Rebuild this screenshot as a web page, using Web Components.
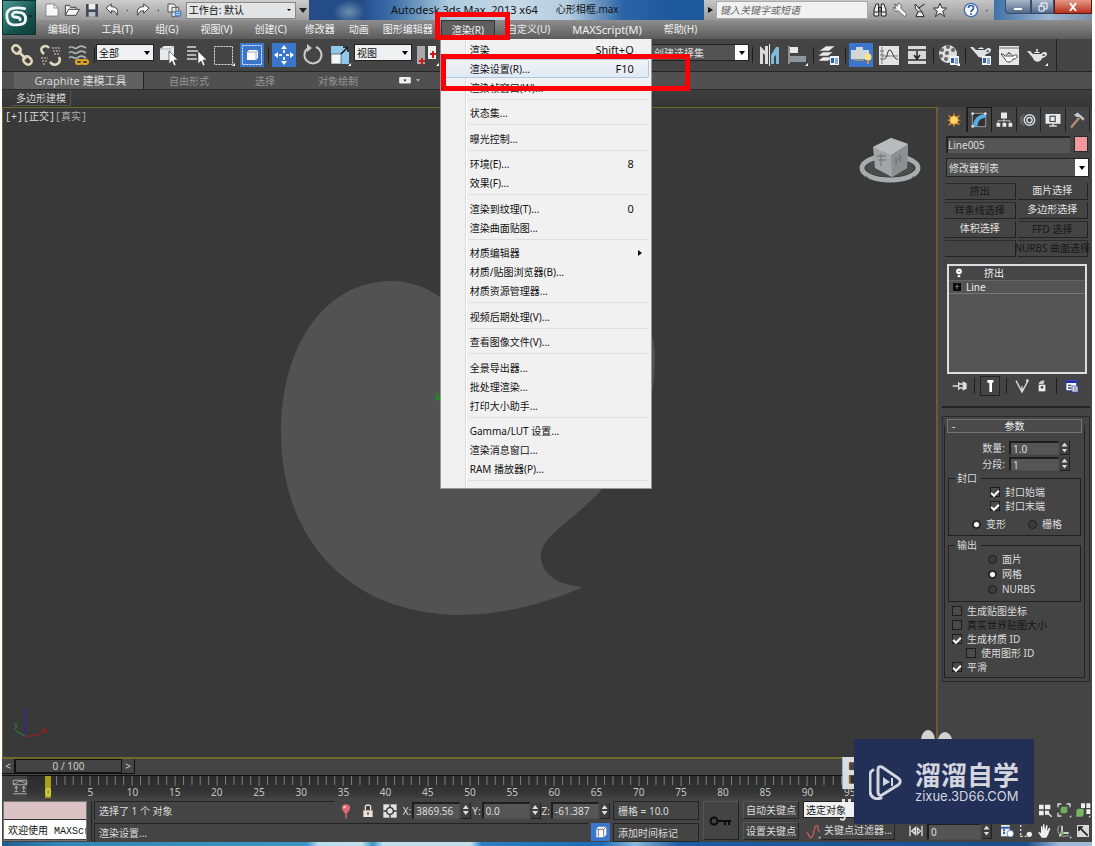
<!DOCTYPE html>
<html lang="zh-CN">
<head>
<meta charset="utf-8">
<title>Autodesk 3ds Max 2013 x64 - 心形相框.max</title>
<style>
html,body{margin:0;height:100%}
body{background:#fff;font:10px/14px "Noto Sans","Noto Sans CJK SC",sans-serif;color:#dcdcdc;overflow:hidden}
</style>
</head>
<body>
<max-app></max-app>
<script>
const RESET = `*{box-sizing:border-box}button,input,select{font:inherit;color:inherit;margin:0;padding:0;border:0;background:none;border-radius:0;outline:0}:host([hidden]){display:none}`;

function element(name, css, html) {
  customElements.define(name, class extends HTMLElement {
    constructor() {
      super();
      this.attachShadow({ mode: 'open' });
    }
    connectedCallback() {
      const body = typeof html === 'function' ? html(this) : html;
      this.shadowRoot.innerHTML = `<style>${RESET}${css}</style>${body}`;
    }
  });
}

/* ---------- icon set, all on a 24 unit grid ---------- */
const cubeBadge = '<rect x="13" y="13" width="9" height="9" fill="#eef3fa"/><rect x="14" y="15" width="3" height="5" fill="#2c5fa8"/><path d="M18 16h3M18 18h3M18 20h3" stroke="#2c5fa8"/>';
const fly = '<path d="M20 23l3-3v3z" fill="#fff"/>';
const ICONS = {
  link: '<g fill="none" stroke="#e3dabd" stroke-width="2.500"><rect x="2" y="3" width="9" height="7" rx="3.500" transform="rotate(45 6.500 6.500)"/><rect x="13" y="14" width="9" height="7" rx="3.500" transform="rotate(45 17.500 17.500)"/><path d="M8 8l8 8"/></g>',
  unlink: '<g fill="none" stroke="#e3dabd" stroke-width="2.500"><path d="M11 5C8 1 1 4 4 9l2 2"/><path d="M21 14c3 6-4 10-8 6l-1-1"/></g><g stroke="#8f8c84" stroke-width="2" stroke-dasharray="2 1"><path d="M14 5h8M15 8h7M16 11h5M3 15h7M4 18h5M5 21h3"/></g>',
  bind: '<g fill="none" stroke="#a8b4b8" stroke-width="1.6"><path d="M3 5c3-4 5 2 8 0s5-3 9 0M3 10c3-4 5 2 8 0s5-3 9 0M3 15c3-4 5 2 8 0s5-3 9 0"/></g><g fill="none" stroke="#e6a51e" stroke-width="2"><rect x="10" y="17" width="6" height="4" rx="2"/><rect x="16" y="17" width="6" height="4" rx="2"/></g>',
  pick: '<path d="M4 6l4-3h10v11l-4 3H4z" fill="#e8ebee"/><path d="M4 6h10v11M14 6l4-3" fill="none" stroke="#aab0b5"/><path d="M13 8v13l3-3 2 5 2-1-2-5h4z" fill="#fff" stroke="#444" stroke-width=".7"/>',
  list: '<path d="M3 4h9M3 8h11M3 12h9M3 16h10" stroke="#d5d5d5" stroke-width="1.6"/><path d="M14 8v13l3-3 2 5 2-1-2-5h4z" fill="#fff" stroke="#444" stroke-width=".7"/>',
  region: '<rect x="2.500" y="3.500" width="18" height="18" fill="none" stroke="#e0e0e0" stroke-dasharray="2 1"/>' + fly,
  windowSel: '<rect x="2.500" y="2.500" width="19" height="19" fill="none" stroke="#e8f0ff" stroke-dasharray="2 1"/><path d="M7 9l2-2h9v8l-2 2H7z" fill="#fff"/><path d="M7 9h9v8M16 9l2-2" fill="none" stroke="#9aabbd"/>',
  move: '<path d="M12 2l3 4H9zM12 22l3-4H9zM2 12l4-3v6zM22 12l-4-3v6z" fill="#fff"/><path d="M11 7h2v3h-2zM11 14h2v3h-2zM7 11h3v2H7zM14 11h3v2h-3z" fill="#e6effa"/>',
  rotate: '<path d="M8 5a8.500 8.500 0 1 0 8-1" fill="none" stroke="#c9c9c9" stroke-width="2"/><path d="M7 1v8l5-4z" fill="#c9c9c9"/>',
  scale: '<rect x="3" y="3" width="18" height="18" fill="#8fc8ea"/><rect x="3" y="11" width="10" height="10" fill="#f2f4f6" stroke="#333" stroke-width=".6"/><path d="M13 11l6-6M15 4h5v5" stroke="#101010" fill="none" stroke-width="1.500"/>' + fly,
  pivot: '<path d="M1 3h8v18H1z" fill="#a9a9a9"/><path d="M12 3h8v13h-8z" fill="#f0f0f0"/><path d="M6 15v7M3 18h6M17 8v7M14 11h6" stroke="#d01818" stroke-width="2"/>' + fly,
  mirror: '<path d="M3 21V3l5 5V3h3v18H8v-9l-2-2v11z" fill="#d9dde0"/><path d="M12.500 1v22" stroke="#e8e8e8"/><path d="M14 21v-9l5-8h3v17h-3v-9l-2 2v7z" fill="#7fb9de"/>',
  align: '<path d="M4 3v18" stroke="#ddd"/><rect x="5" y="4" width="8" height="6" fill="#e8e8e8"/><rect x="5" y="13" width="16" height="6" fill="#8f979c"/>' + fly,
  layers: '<path d="M2 8l7-5h9l-6 5zM2 12l4-3h10l-5 4H2zM2 17l4-3h10l-5 4H2z" fill="#e9e9e9" stroke="#555" stroke-width=".6"/>' + cubeBadge,
  ribbon: '<path d="M2 7h5V4h7v3h6v9H2z" fill="#d3d6d8"/><path d="M2 16l4 2h9v-2" fill="#8d9194"/><circle cx="19" cy="14" r="3.500" fill="#ffe08a"/><path d="M18 17h2v4h-2z" fill="#e0912a"/>',
  curve: '<rect x="2" y="3" width="20" height="19" fill="#e4e4e4"/><path d="M5 4v17M3 8h4M3 12h4M3 16h4M6 13h15" stroke="#777"/><path d="M7 16c4 0 3-10 6-9s3 10 8 9" fill="none" stroke="#333"/>',
  schematic: '<rect x="3" y="3" width="18" height="18" fill="#d8d8d8"/><path d="M3 7h18M3 17h18" stroke="#555" stroke-width="2"/><path d="M12 8v7M9 12l3 4 3-4" stroke="#222" fill="none" stroke-width="1.500"/>',
  material: '<circle cx="11" cy="11" r="9" fill="#dedede"/><g fill="#666"><circle cx="11" cy="4" r="2"/><circle cx="5" cy="7" r="2"/><circle cx="16" cy="7" r="2"/><circle cx="10" cy="10" r="2"/><circle cx="4" cy="13" r="2"/><circle cx="9" cy="16" r="2"/></g>' + cubeBadge + fly,
  renderSetup: '<path d="M1 4h3l3 3h9c3-3 6-2 6 0s-3 4-5 4c-1 4-7 5-9 1z" fill="#dde1e4"/><path d="M17 8c2-1 3-1 3 0s-1 1-2 1z" fill="#444"/><path d="M9 6c1-2 5-2 6 0z" fill="#eee"/>' + cubeBadge,
  frame: '<rect x="2" y="3" width="20" height="19" fill="#e8e8e8"/><path d="M2 5h20" stroke="#aaa" stroke-width="2"/><path d="M4 11h2l2 2h8c3-2 5-1 4 1s-2 2-4 2c-1 4-7 4-8 0z" fill="#fafafa" stroke="#444"/><path d="M9 12c1-2 5-2 6 0M12 9v1" fill="none" stroke="#444"/>',
  teapot: '<path d="M2 8h3l3 3h8c3-3 6-2 6 0s-3 4-5 4c-1 5-8 5-9 0z" fill="#dfe3e6"/><path d="M17 12c2-1 3-1 3 0s-1 1-2 1z" fill="#444"/><path d="M9 10c1-2 5-2 6 0z" fill="#eee"/><circle cx="12" cy="7" r="1" fill="#eee"/>' + fly,
  sun: '<path d="M12 2l2 6 6-3-3 6 5 1-5 2 3 5-6-2-2 5-2-5-6 3 3-6-5-2 5-1-3-6 6 3z" fill="#d98a2c"/><circle cx="12" cy="12" r="5" fill="#ffd66a"/>',
  modify: '<rect x="3" y="3" width="18" height="18" fill="#333" stroke="#b9b9b9"/><path d="M4 21C4 11 11 4 21 4v5c-7 0-11 5-11 12z" fill="#5aaee6"/><path d="M2 2h3v3H2zM19 2h3v3h-3zM2 19h3v3H2z" fill="#eee"/>',
  hierarchy: '<path d="M8 2h8v8H8z" fill="#e8e8e8"/><path d="M12 10v6M4 17v-4h16v4" stroke="#ddd" fill="none"/><path d="M2 16h5v5H2zM10 16h5v5h-5zM18 16h5v5h-5z" fill="#e8e8e8"/>',
  motion: '<circle cx="14" cy="12" r="7" fill="none" stroke="#d5d8da" stroke-width="2"/><circle cx="14" cy="12" r="3.500" fill="none" stroke="#d5d8da" stroke-width="2"/><path d="M4 6c-3 4-3 8 0 12M7 4c-4 5-4 11 0 16" fill="none" stroke="#888"/>',
  display: '<rect x="2" y="4" width="20" height="13" fill="#e9ebed"/><rect x="8" y="7" width="7" height="7" fill="none" stroke="#444" stroke-width="1.500"/><path d="M7 20h10M12 17v3" stroke="#ddd" stroke-width="2"/>',
  hammer: '<path d="M4 22L15 9" stroke="#b98e74" stroke-width="3"/><path d="M8 5l5-3 9 8-2 3-5-5-4 0z" fill="#c3c8cb"/>',
  pin: '<path d="M1 12h9M10 6v12M10 9h7M10 15h7" stroke="#ddd" stroke-width="2" fill="none"/><path d="M16 5l6 3v8l-6 3z" fill="#ddd"/>',
  showEnd: '<path d="M8 3h9v4h-2v14h-4V7H8z" fill="#fff"/>',
  unique: '<path d="M3 4l9 17 9-17M12 20v-8M7 12l5 8 5-8" fill="none" stroke="#ddd" stroke-width="2"/><circle cx="20" cy="4" r="2" fill="#ddd"/>',
  bin: '<path d="M7 10h10v10H7z" fill="#eee"/><path d="M7 9c0-4 5-6 9-5l-2 5z" fill="#ccc"/><circle cx="12" cy="14" r="2" fill="#444"/>',
  config: '<rect x="3" y="4" width="16" height="15" fill="#fff" stroke="#1a2cc0"/><path d="M3 6h16" stroke="#1a2cc0" stroke-width="3"/><path d="M6 11h5M6 15h5" stroke="#444" stroke-width="2"/><path d="M12 12h9v9h-9z" fill="#e8e8e8" stroke="#1a2cc0"/><path d="M15 15h4M15 18h4" stroke="#333"/>',
  bulb: '<circle cx="12" cy="8" r="7" fill="#fff"/><path d="M9 8h6" stroke="#555" stroke-width="2"/><path d="M9 17h6v5H9z" fill="#fff"/>',
  fileNew: '<path d="M3 3h12l6 6v12H3z" fill="#f8f8f8" stroke="#666"/><path d="M15 3v6h6" fill="none" stroke="#666"/>',
  open: '<path d="M2 20V5h6l2 3h8v3" fill="#e8e8e8" stroke="#444" stroke-width="1.500"/><path d="M2 20l5-9h16l-5 9z" fill="#f8f8f8" stroke="#444" stroke-width="1.500"/>',
  save: '<path d="M3 3h18v19H3z" fill="#404a56"/><path d="M7 3h10v8H7z" fill="#eee"/><path d="M7 15h10v7H7z" fill="#b8c0c8"/>',
  undo: '<path d="M3 9l8-6v4c8 0 11 5 9 13-2-5-4-7-9-7v4z" fill="#f5f5f5" stroke="#444" stroke-width="1.500"/>',
  redo: '<path d="M21 9l-8-6v4C5 7 2 12 4 20c2-5 4-7 9-7v4z" fill="#f5f5f5" stroke="#444" stroke-width="1.500"/>',
  project: '<path d="M3 3h9l3 3v9H3zM9 8h10v14H9z" fill="#eee" stroke="#555" stroke-width="1.500"/><path d="M13 13h10v9H13z" fill="#4b86c8"/><path d="M15 16h6M15 19h6" stroke="#fff"/>',
  binocular: '<path d="M3 21V12l3-9h4v18zM21 21V12l-3-9h-4v18z" fill="#eee" stroke="#222" stroke-width="1.500"/><path d="M10 8h4v6h-4zM3 15h7M14 15h7" stroke="#222" fill="none" stroke-width="1.500"/>',
  wrench: '<path d="M4 3l4 3 1-4c4 0 6 4 4 7l9 9-3 4-10-9C5 15 2 12 2 8l4 2z" fill="#f4f4f4" stroke="#333"/>',
  dish: '<path d="M5 3c-2 6 3 13 10 12zM10 9l9-6M9 15l-3 7h12l-3-7" fill="#eee" stroke="#222" stroke-width="1.500"/>',
  star: '<path d="M12 2l3 7h7l-6 5 3 8-7-5-7 5 3-8-6-5h7z" fill="#f0f0f0" stroke="#333" stroke-width="1.500"/>',
  help: '<circle cx="12" cy="12" r="10" fill="#fff" stroke="#3d6fb4" stroke-width="2"/><path d="M8 9c0-5 8-5 8 0 0 3-4 3-4 6" fill="none" stroke="#2a5cab" stroke-width="2.500"/><circle cx="12" cy="18" r="1.500" fill="#2a5cab"/>',
  camera: '<rect x="2" y="7" width="20" height="11" rx="2" fill="#eee"/><path d="M9 11h6l-3 4z" fill="#333"/>',
  minicurve: '<path d="M3 3h18M3 9h18M3 3v6M21 3v6M3 21h18" stroke="#ccc" fill="none"/><path d="M3 8c6 0 5-4 9-4s6 4 9 3M7 11v6M17 11v6M5 14l2-3 2 3M15 14l2-3 2 3M5 18h4M15 18h4" stroke="#ccc" fill="none"/>',
  balloon: '<path d="M12 2c8 0 8 8 1 14v7h-2v-7C4 10 4 2 12 2z" fill="#e0696f"/><circle cx="10" cy="6" r="2" fill="#f7c3c4"/>',
  lock: '<path d="M8 11V6c0-4 8-4 8 0v5" fill="none" stroke="#ddd" stroke-width="2"/><rect x="5" y="11" width="14" height="10" fill="#f1e3cf"/><path d="M12 14v4" stroke="#444" stroke-width="2"/>',
  absmode: '<rect x="2" y="2" width="20" height="20" fill="#dfe2e4"/><circle cx="12" cy="12" r="5" fill="none" stroke="#333" stroke-width="2"/><path d="M12 2v5M12 17v5M2 12h5M17 12h5" stroke="#333" stroke-width="2"/>',
  cube: '<path d="M5 8l3-4h12v12l-4 4H5z" fill="#fff"/><path d="M6 8h10v11M16 8l4-4M8 8v11" fill="none" stroke="#333"/>',
  key: '<circle cx="5" cy="12" r="3.500" fill="none" stroke="#0c0c0c" stroke-width="2"/><path d="M9 12h13M16 12v4M20 12v4" stroke="#0c0c0c" stroke-width="2"/>',
  tangent: '<path d="M2 14c4 0 3 8 7 8 5 0 4-20 9-18 3 2 1 9 4 9" fill="none" stroke="#c85a5e" stroke-width="2"/>' + fly,
  keymode: '<path d="M3 4v16M21 4v16" stroke="#ddd" stroke-width="2"/><path d="M12 5v14l-8-7zM20 12l-7-7v14z" fill="#ddd"/><path d="M8 12h2M15 12h2" stroke="#444" stroke-width="2"/>',
  timecfg: '<path d="M3 3h13v17H3z" fill="#eee"/><path d="M3 7h13M6 11h3M6 15h3" stroke="#2f5fae" stroke-width="3"/><circle cx="17" cy="16" r="5" fill="#fff" stroke="#2f5fae"/>',
  zoomAll: '<path d="M3 4h7v7H3zM12 4h8v7h-8zM3 13h7v7H3zM12 13h6v6h-6z" fill="#eee"/><path d="M15 15l7 7" stroke="#eee" stroke-width="2"/>',
  extents: '<path d="M3 8V3h5M16 3h5v5M3 16v5h5" fill="none" stroke="#ddd" stroke-width="2"/><path d="M7 9l2-2h8v8l-2 2H7z" fill="#6fae5e"/>' + fly,
  extentsAll: '<path d="M9 2h6v7H9zM17 2h6v7h-6zM17 11h6v7h-6z" fill="#eee"/><path d="M2 13l2-3h9v9l-2 3H2z" fill="#78b565"/>' + fly,
  fov: '<path d="M4 3v3M4 9v3M4 15v3M3 20h4M10 20h3" stroke="#ddd" stroke-width="2"/><circle cx="17" cy="17" r="4" fill="#eee"/>',
  hand: '<path d="M7 22c-2-4-5-6-5-9l4 2V5l2 0 1 6V2h2l1 9 2-8 2 1-1 8 3-5 2 1-3 9-3 5z" fill="#eee"/>',
  orbit: '<path d="M5 4c-4 5-3 14 5 16l10-1" fill="none" stroke="#ddd"/><path d="M9 4v11h10M9 15l-4 5" fill="none" stroke="#fff" stroke-width="2"/><circle cx="9" cy="15" r="3" fill="#7cb66a"/>' + fly,
  maximize: '<path d="M3 3h18v18H3z" fill="#d8d8d8"/><path d="M6 12V6h6M7 7l12 12" stroke="#222" fill="none" stroke-width="2.500"/>'
};
element('mx-icon',
  `:host{display:inline-flex;flex:none;width:24px;height:24px}
   :host([size=m]){width:16px;height:16px}
   svg{width:100%;height:100%;display:block}`,
  el => `<svg viewBox="0 0 24 24" aria-hidden="true">${ICONS[el.getAttribute('name')] || ''}</svg>`);

element('mx-tool', `:host{display:block;flex:none}
   button{display:flex;width:28px;height:26px;align-items:center;justify-content:center}
   :host([on]) mx-icon{background:#3a76cc}
   :host([size=s]) button{width:19px;height:18px}:host([size=s]) mx-icon{width:16px;height:16px}
   :host([size=s][on]) button{background:#3a76cc}
   :host([size=q]) button{width:20px;height:20px}:host([size=q]) mx-icon{width:16px;height:16px}`,
  el => `<button aria-label="${el.getAttribute('icon')}"><mx-icon name="${el.getAttribute('icon')}"></mx-icon></button>`);

element('mx-rule', `:host{flex:none;width:4px;height:16px;display:flex;justify-content:center}
   :host([wide]){width:6px}i{width:1px;background:#1d1d1d}`, '<i></i>');

element('mx-select', `:host{display:flex;background:#eef0f1;color:#111;height:17px;border:1px solid #222}
   select{appearance:none;flex:1;min-width:0;padding-left:2px}
   span{width:13px;display:flex;align-items:center;justify-content:center}
   span::after{content:"";border:3px solid transparent;border-top:4px solid #000;border-bottom:0}
   :host([dark]){background:#535353;color:#ddd}:host([dark]) span{background:#fff}
   :host([dim]){background:#e2e4e6;border-color:#888}:host([dim]) span::after{border-width:2px}`,
  el => `<select aria-label="${el.getAttribute('label')}"><option>${el.textContent}</option></select><span></span>`);

/* label, number field and its two arrow buttons */
element('mx-spin', `:host{display:flex;align-items:center;gap:1px}
   label{display:flex;align-items:center;gap:1px}
   input{width:48px;height:17px;background:#555;border:2px solid #1e1e1e;border-right:1px solid #4e4e4e;border-bottom:1px solid #4e4e4e;padding:0 0 0 2px;color:#ddd}
   .a{display:flex;flex-direction:column;gap:2px;width:10px;height:16px;justify-content:center;align-items:center;background:#3e3e3e;border-right:1px solid #222;border-bottom:1px solid #222}
   .a button{width:6px;height:4px;background:#ddd;clip-path:polygon(50% 0,100% 100%,0 100%)}
   .a button+button{clip-path:polygon(0 0,100% 0,50% 100%)}
   :host([panel]) input{width:50px;height:14px;line-height:11px}:host([panel]) label{gap:4px}:host([panel]) .a{height:14px}
   :host([frame]) input{width:54px}`,
  el => `<label>${el.getAttribute('label') || ''}<input aria-label="${el.getAttribute('label') || '当前帧'}" value="${el.getAttribute('value')}"></label>
   <div class="a"><button aria-label="增加"></button><button aria-label="减少"></button></div>`);

element('mx-check', `:host{display:block}label{display:flex;align-items:center;gap:5px;height:14px;white-space:nowrap}
   input{appearance:none;width:10px;height:10px;background:#4a4a4a;border:1px solid #1c1c1c;display:grid;place-items:center}
   input[type=radio]{border-radius:50%;background:#3c3c3c;width:9px;height:9px}
   input[type=radio]:checked::after{content:"";width:5px;height:5px;border-radius:50%;background:#fff}
   input[type=checkbox]:checked::after{content:"";width:6px;height:3px;border-left:2px solid #fff;border-bottom:2px solid #fff;transform:rotate(-45deg)}
   :host([off]){color:#161616}`,
  el => `<label><input type="${el.getAttribute('type') || 'checkbox'}" ${el.hasAttribute('checked') ? 'checked' : ''}><slot></slot></label>`);

/* ---------- title bar ---------- */
element('title-bar', `:host{display:flex;height:20px;position:relative;color:#111;
   background:radial-gradient(ellipse 16px 12px at 347px 12px,#6d8fb0,transparent),linear-gradient(90deg,#244c86 0 33%,#2b5a9a 34%,#3f72a8 36%,#aecbe0 41%,#c6d9e6 47%,#b5cde0 52%,#2b64a6 57%,#1d589c 62%,#2a64a0 90%,#9db6d2 96%,#7f8fa8)}
   .logo{position:absolute;left:0;top:0;width:34px;height:35px;background:linear-gradient(135deg,#4a9a94,#16534f 60%,#0e3d3b);z-index:2;border:1px solid #0c3331}
   .logo svg{width:100%;height:100%;display:block}
   .quick{display:flex;width:307px;padding-left:40px;background:linear-gradient(#cdcdcd,#9c9c9c);align-items:center}
   .quick mx-select{width:111px;margin-left:2px}
   .dot{width:11px;text-align:center;color:#333}
   .more{width:13px;display:flex;justify-content:center}.more::after{content:"";border:4px solid transparent;border-top:5px solid #222;border-bottom:0}
   h1{flex:1;margin:0;font-size:11px;line-height:19px;font-weight:400;white-space:pre;padding-left:82px;display:flex;gap:18px}
   h1 span{font-size:10px}
   .info{display:flex;width:290px;background:linear-gradient(#c6c6c6,#989898);align-items:center}
   .play{width:12px;display:flex;justify-content:center}.play::after{content:"";border:3px solid transparent;border-left:5px solid #111;border-right:0}
   .info input{width:152px;height:18px;background:#f1f1f1;border:1px solid #aaa;font-style:italic;padding-left:3px;margin-right:2px}
   .info input::placeholder{color:#666;opacity:1}.help{margin-left:11px}
   .win{display:flex;padding-left:11px;width:98px;height:14px}
   .win button{height:14px;color:#fff;border:1px solid #3a4c66;border-top:0;background:linear-gradient(#a9b8ca,#51698b);display:grid;place-items:center}
   .win svg{width:12px;height:10px}
   .n{width:26px;border-bottom-left-radius:4px!important}.m{width:23px}.win .x{flex:1;background:linear-gradient(#e59a86,#b8301c);border-color:#5c1810}`,
  `<button class="logo" aria-label="应用程序菜单"><svg viewBox="0 0 34 35"><path d="M23 8C12 6 4 8 4 15c0 4 1 9 6 10 8 1 14 0 14-6 0-4-2-7-8-7-6-1-8 4-4 5 4 0 7 1 6 3" fill="none" stroke="#f2f6f6" stroke-width="3" stroke-linecap="round"/><path d="M26 15h6l-3 3z" fill="#052a28"/></svg></button>
   <div class="quick"><mx-tool size="q" icon="fileNew"></mx-tool><mx-tool size="q" icon="open"></mx-tool><mx-tool size="q" icon="save"></mx-tool><mx-tool size="q" icon="undo"></mx-tool><span class="dot">·</span><mx-tool size="q" icon="redo"></mx-tool><span class="dot">·</span><mx-tool size="q" icon="project"></mx-tool><mx-select dim label="工作台">工作台: 默认</mx-select><span class="more"></span></div>
   <h1>Autodesk 3ds Max  2013 x64<span>心形相框.max</span></h1>
   <div class="info"><span class="play"></span><input type="search" aria-label="搜索" placeholder="键入关键字或短语"><mx-tool size="q" icon="binocular"></mx-tool><mx-tool size="q" icon="wrench"></mx-tool><mx-tool size="q" icon="dish"></mx-tool><mx-tool size="q" icon="star"></mx-tool><mx-tool class="help" size="q" icon="help"></mx-tool><span class="dot">·</span></div>
   <div class="win"><button class="n" aria-label="最小化"><svg viewBox="0 0 12 10"><path d="M2 7h8" stroke="#fff" stroke-width="2"/></svg></button><button class="m" aria-label="还原"><svg viewBox="0 0 12 10"><path d="M2 4h5v5H2zM4 4V1h6v6H7" fill="none" stroke="#fff"/></svg></button><button class="x" aria-label="关闭"><svg viewBox="0 0 12 10"><path d="M3 1l6 8M9 1L3 9" stroke="#fff" stroke-width="2"/></svg></button></div>`);

/* ---------- menu bar and the open drop-down ---------- */
element('menu-entry', `:host{display:block;position:relative;flex:none}
   button{height:19px;padding:0 10px;line-height:19px;color:#f1f1f1;white-space:nowrap}
   :host([tight]) button{padding:0 6px}:host([open]) button{background:#5e5e5e;border:1px solid #333;border-bottom:0;line-height:18px}
   :host([big]) button{font-size:11px}
   ::slotted(drop-menu){position:absolute;left:-1px;top:19px;z-index:10}`,
  el => `<button>${el.getAttribute('text')}</button><slot></slot>`);

element('drop-menu', `:host{display:block;width:212px;border:1px solid #979797;border-top:0;background:linear-gradient(90deg,#f0f0f0 24px,#dcdcdc 24px 25px,#fff 25px 26px,#f1f1f1 26px);padding:1px 2px 3px;color:#111}`,
  '<slot></slot>');
element('menu-group', `:host{display:block;padding-bottom:4px;margin-bottom:2px;background:linear-gradient(90deg,transparent 26px,#dedede 26px) 0 calc(100% - 1px)/100% 1px no-repeat}
   :host(:nth-of-type(even)){margin-bottom:3px}`, '<slot></slot>');
element('menu-cmd', `:host{display:block;height:19px}
   button{display:flex;justify-content:space-between;align-items:center;width:100%;height:19px;padding:0 14px 0 26px;border:1px solid transparent;text-align:left;white-space:nowrap}
   :host([hot]) button{border:1px solid #aec8e6;border-radius:2px;background:linear-gradient(#f2f6fb80,#e0e9f6)}
   kbd{font:inherit;font-size:11px}
   :host([sub]) kbd{border:4px solid transparent;border-left-color:#111;border-right:0;border-width:3px 0 3px 4px;margin-right:-8px}`,
  el => `<button><span><slot></slot></span><kbd>${el.getAttribute('key') || ''}</kbd></button>`);

const MENU = [
  [['渲染', 'Shift+Q'], ['渲染设置(R)...', 'F10', 'hot'], ['渲染帧窗口(W)...']],
  [['状态集...']], [['曝光控制...']],
  [['环境(E)...', '8'], ['效果(F)...']],
  [['渲染到纹理(T)...', '0'], ['渲染曲面贴图...']],
  [['材质编辑器', '', 'sub'], ['材质/贴图浏览器(B)...'], ['材质资源管理器...']],
  [['视频后期处理(V)...']], [['查看图像文件(V)...']],
  [['全景导出器...'], ['批处理渲染...'], ['打印大小助手...']],
  [['Gamma/LUT 设置...'], ['渲染消息窗口...'], ['RAM 播放器(P)...']]
];
element('menu-bar', `:host{display:flex;gap:2px;height:19px;padding-left:36px;background:linear-gradient(#8e8e8e,#5b5b5b);position:relative;z-index:1}`,
  `<menu-entry text="编辑(E)"></menu-entry><menu-entry text="工具(T)"></menu-entry><menu-entry text="组(G)"></menu-entry><menu-entry text="视图(V)"></menu-entry><menu-entry text="创建(C)"></menu-entry><menu-entry tight text="修改器"></menu-entry><menu-entry tight text="动画"></menu-entry><menu-entry tight text="图形编辑器"></menu-entry>
   <menu-entry open text="渲染(R)"><drop-menu>${MENU.map(g => `<menu-group>${g.map(([t, k, f]) => `<menu-cmd key="${k || ''}" ${f || ''}>${t}</menu-cmd>`).join('')}</menu-group>`).join('')}</drop-menu></menu-entry>
   <menu-entry text="自定义(U)"></menu-entry><menu-entry big text="MAXScript(M)"></menu-entry><menu-entry text="帮助(H)"></menu-entry>`);

/* ---------- main toolbar ---------- */
const tools = s => s.split(' ').map(t => t === '|' ? '<mx-rule></mx-rule>' : t === '||' ? '<mx-rule wide></mx-rule>' : `<mx-tool icon="${t.replace('*', '')}" ${t.endsWith('*') ? 'on' : ''}></mx-tool>`).join('');
element('tool-bar', `:host{display:flex;height:33px;background:#444;border-bottom:1px solid #262626;padding:0 35px 0 6px}
   .in{flex:1;display:flex;align-items:center;border-right:1px solid #222;padding-right:5px}
   mx-select{margin-bottom:5px}.a{width:58px}.b{width:58px;margin-right:2px}.c{width:98px;margin-left:auto}`,
  `<div class="in">${tools('link unlink bind |')}<mx-select class="a" label="选择过滤器">全部</mx-select>${tools('pick list region windowSel* | move* rotate scale')}<mx-select class="b" label="参考坐标系">视图</mx-select>${tools('pivot')}
   <mx-select class="c" dark label="命名选择集">创建选择集</mx-select>${tools('|| mirror align | layers | ribbon* curve schematic | material | renderSetup frame teapot')}</div>`);

element('ribbon-bar', `:host{display:block;background:linear-gradient(#464646,#363636)}
   nav{display:flex;height:18px;background:#505050;border-bottom:1px solid #2a2a2a;padding-left:12px}
   nav button{font-size:11px;width:130px;height:17px;padding-left:4px;color:#d8d8d8;background:#616161;border-right:1px solid #222}
   nav button+button{font-size:10px;width:80px;color:#969696;background:none;border:0}
   nav .w{width:86px!important}nav .w2{width:66px!important}
   nav mx-icon{width:14px;height:14px;margin:1px 0 0 22px}
   nav i{border:2px solid transparent;border-top:3px solid #aaa;border-bottom:0;height:0;margin:7px 0 0 4px}
   div{height:17px;padding-left:10px}div button{height:16px;padding:0 4px;color:#d6d6d6;border:1px solid #555;border-top:0;border-left:0}`,
  `<nav><button>Graphite 建模工具</button><button class="w">自由形式</button><button class="w2">选择</button><button>对象绘制</button><mx-icon name="camera"></mx-icon><i></i></nav><div><button>多边形建模</button></div>`);

/* ---------- viewport ---------- */
element('view-port', `:host{display:block;flex:1;min-height:0;background:#393939;border:1px solid #6f6a2a;border-right:2px solid #6b5b3c;border-bottom:2px solid #6f6a2a;position:relative;overflow:hidden}
   svg{position:absolute;inset:0;width:100%;height:100%}
   p{position:absolute;left:2px;top:3px;margin:0;font:10px/14px "Liberation Mono","Noto Sans CJK SC",monospace;color:#ddd}p span{color:#aaa}
   text{font:8px "Noto Sans",sans-serif}`,
  `<svg viewBox="3 108 933 649"><path d="M392 281C322 281 281 350 281 432C281 540 350 615 462 615C500 615 545 604 583 587C555 585 541 572 541 556C541 535 575 520 603 488C640 450 656 405 655 352C650 300 620 280 560 300C510 320 470 320 440 297C425 286 408 281 392 281Z" fill="#525252"/>
   <path d="M436 392v9l5-2z" fill="#1f8a1f"/>
   <ellipse cx="890" cy="168" rx="28" ry="12" fill="none" stroke="#a9abae" stroke-width="5"/><ellipse cx="890" cy="168" rx="24" ry="9" fill="#4c4c4c"/><path d="M873 147l18-9 17 6-1 24-15 9-17-9z" fill="#a3a5a8"/><path d="M873 147l18 8 17-11-17-6z" fill="#b9bbbe"/><path d="M891 155l17-11-1 24-15 9z" fill="#8d8f92"/><path d="M877 156h9M878 160h8M881 154v12M896 157v8M900 154v8M896 161l6-4" stroke="#6d6f72" fill="none"/><path d="M866 176l4 4M914 176l-4 4" stroke="#55575a"/>
   <path d="M25 736V717" stroke="#2424c8"/><path d="M25 736l-9-5" stroke="#2c8a2c"/><path d="M25 736c10 1 16-3 21-5" stroke="#b01818" fill="none"/><path d="M42 729l5 3M46 728l-3 5" stroke="#b01818"/><text x="24" y="715" fill="#2424c8">z</text><text x="14" y="728" fill="#2c8a2c">y</text></svg>
   <p>[+][正交]<span>[真实]</span></p>`);

/* ---------- time slider and track bar ---------- */
element('time-slider', `:host{display:flex;height:16px;background:#444;color:#ccc}
   button{height:15px;border-right:1px solid #111;border-bottom:1px solid #111}.e{width:13px}.h{width:107px;border:1px solid #111;border-bottom-width:2px;line-height:12px}`,
  `<button class="e" aria-label="上一帧">&lt;</button><button class="h">0 / 100</button><button class="e" aria-label="下一帧">&gt;</button>`);

element('track-bar', `:host{display:flex;height:23px;background:linear-gradient(#2b2b2b,#333 14px,#3f3f3f);border-top:1px solid #111;padding-right:25px;color:#c4c4c4}
   .l{width:25px;background:#444;display:flex;flex:none;position:relative;z-index:1}
   .l mx-icon{margin:2px 0 0 8px;width:20px;height:18px}
   ol{flex:1;display:flex;list-style:none;margin:0;padding:0;position:relative}
   li{flex:1;text-align:center;line-height:12px;position:relative;min-width:0}
   li svg{display:block;width:100%;height:10px}
   li.now{background:linear-gradient(#a89d1c,#a89d1c) center/6px 100% no-repeat;color:#fff36a}`,
  `<div class="l"><mx-icon name="minicurve"></mx-icon></div><ol>${Array.from({ length: 21 }, (_, i) => `<li class="${i ? '' : 'now'}"><svg viewBox="0 0 50 10" preserveAspectRatio="none"><path d="${i ? 'M5 0v9M15 0v9M25 0v10' : ''}M35 0v9M45 0v9" stroke="#848484"/></svg>${i * 5 === 100 ? '' : i * 5}</li>`).join('')}</ol>`);

/* ---------- command panel ---------- */
element('roll-out', `:host{display:block;border:1px solid #2a2a2a;margin-top:8px;padding:2px 7px 3px 4px}
   h2{margin:0;font:inherit;display:flex;justify-content:center;height:14px;line-height:12px;border:1px solid #747474;background:#4a4a4a;color:#eee;position:relative}
   h2::before{content:"-";position:absolute;left:4px}
   .b{border:1px solid #222;border-top:0;margin:-8px -3px 0;padding:16px 3px 3px 3px}`,
  el => `<h2>${el.getAttribute('title')}</h2><div class="b"><slot></slot></div>`);

element('group-box', `:host{display:block}fieldset{border:1px solid #202020;margin:0;padding:0 2px 4px;min-width:0}
   legend{padding:0 4px 0 2px;margin-left:4px;line-height:14px;height:14px}`,
  el => `<fieldset><legend>${el.getAttribute('text')}</legend><slot></slot></fieldset>`);

element('command-panel', `:host{display:block;width:154px;flex:none;background:#444;padding:0 2px 0 4px}
   .tabs{display:flex;height:25px;margin-bottom:4px}
   .tabs button{flex:1;border-right:1px solid #222;display:grid;place-items:center}.tabs button.on{border:1px solid #1b1b1b;border-bottom:0}.tabs mx-icon{width:18px;height:18px}
   .name{display:flex;gap:4px;padding:0 2px 0 4px}.name input{flex:1;min-width:0;height:17px;line-height:13px;background:#555;border:2px solid #222;border-right:0;border-bottom:0;padding:0 0 2px}
   .name i{width:14px;height:16px;background:#f0989a;border:1px solid #2a2a2a}
   mx-select{height:19px;margin:5px 1px 6px 4px}
   .sets{display:grid;grid-template-columns:1fr 1fr;gap:2px;padding:0 2px 0 3px}
   .sets button{height:17px;line-height:15px;white-space:nowrap;border-right:1px solid #222;border-bottom:1px solid #222;min-width:0;display:flex;justify-content:center;color:#e2e2e2}
   .sets .off{color:#181818;border-top:1px solid #2c2c2c}
   .stack{height:110px;border:2px solid #ddd;background:#545454;margin:7px 3px 0 5px}
   .stack div{display:flex;align-items:center;height:14px;background:#464646;color:#eee;padding-left:5px}
   .stack div+div{background:#545454;border-top:1px solid #666;border-bottom:1px solid #777;padding-left:4px;gap:5px}
   .stack mx-icon{width:10px;height:12px;margin-right:20px}
   .plus{width:8px;height:8px;background:#0a0a0a;color:#aaa;font-size:8px;line-height:7px;text-align:center}
   .ops{display:flex;align-items:center;height:24px;padding:0 8px 0 10px}.ops mx-icon{width:16px;height:16px}
   .ops button{width:20px;height:20px;display:grid;place-items:center}.ops .on{border:1px solid #222}
   .ops mx-rule{margin:0 4px}.ops .g{margin-left:auto}
   hr{border:0;border-top:2px solid #222;margin:8px 0 0}
   .num{display:flex;flex-direction:column;align-items:flex-end;gap:2px;padding-right:11px}
   .c{padding-left:39px}.r{display:flex;gap:22px;padding-left:21px;margin-top:4px}.o{padding-left:37px}.o mx-check{margin-bottom:1px}
   group-box{margin-bottom:2px}.t{padding-left:4px}.i{padding-left:14px}`,
  `<div class="tabs">${['sun', 'modify', 'hierarchy', 'motion', 'display', 'hammer'].map(n => `<button aria-label="${n}" class="${n === 'modify' ? 'on' : ''}"><mx-icon name="${n}"></mx-icon></button>`).join('')}</div>
   <div class="name"><input aria-label="对象名称" value="Line005"><i></i></div>
   <mx-select dark label="修改器列表">修改器列表</mx-select>
   <div class="sets"><button class="off">挤出</button><button>面片选择</button><button class="off">样条线选择</button><button>多边形选择</button><button>体积选择</button><button class="off">FFD 选择</button><button class="off" aria-label="空"></button><button class="off">NURBS 曲面选择</button></div>
   <div class="stack"><div><mx-icon name="bulb"></mx-icon>挤出</div><div><span class="plus">+</span>Line</div></div>
   <div class="ops"><mx-icon name="pin"></mx-icon><mx-rule></mx-rule><button class="on" aria-label="显示最终结果"><mx-icon name="showEnd"></mx-icon></button><mx-rule></mx-rule><button aria-label="使唯一"><mx-icon name="unique"></mx-icon></button><button aria-label="移除修改器"><mx-icon name="bin"></mx-icon></button><mx-rule class="g"></mx-rule><button aria-label="配置修改器集"><mx-icon name="config"></mx-icon></button></div><hr>
   <roll-out title="参数"><div class="num"><mx-spin panel label="数量:" value="1.0"></mx-spin><mx-spin panel label="分段:" value="1"></mx-spin></div>
   <group-box text="封口"><div class="c"><mx-check checked>封口始端</mx-check><mx-check checked>封口末端</mx-check></div><div class="r"><mx-check type="radio" checked>变形</mx-check><mx-check type="radio">栅格</mx-check></div></group-box>
   <group-box text="输出"><div class="o"><mx-check type="radio">面片</mx-check><mx-check type="radio" checked>网格</mx-check><mx-check type="radio">NURBS</mx-check></div></group-box>
   <div class="t"><mx-check>生成贴图坐标</mx-check><mx-check off>真实世界贴图大小</mx-check><mx-check checked>生成材质 ID</mx-check><mx-check class="i">使用图形 ID</mx-check><mx-check checked>平滑</mx-check></div></roll-out>`);

/* ---------- status bar ---------- */
element('status-bar', `:host{display:flex;height:44px;background:#444;padding:3px 0 1px 1px;gap:4px;white-space:nowrap}
   .listen{width:84px;flex:none;border:1px solid #777;color:#111;overflow:hidden}
   .listen i{display:block;height:18px;background:#dbc3c5;border-bottom:1px solid #333}
   .listen input{display:block;width:100%;height:19px;background:#fff;padding-left:4px;font:10px "Liberation Mono","Noto Sans CJK SC",monospace;color:#111}
   .mid{flex:1;display:grid;grid-template-rows:19px 18px;gap:3px;min-width:0;border-left:1px solid #222}
   .row{display:flex;align-items:center;min-width:0;gap:3px}
   .msg{flex:1;height:19px;line-height:18px;border-top:1px solid #222;border-left:1px solid #222;padding-left:4px;margin-left:2px;min-width:0}
   .box{width:86px;height:19px;line-height:18px;border:1px solid #242424;padding-left:4px}
   .coords{display:flex;gap:1px}
   .key{width:36px;height:39px;border:1px solid #222;border-left-color:#555;border-top-color:#555;display:grid;place-items:center;flex:none}
   .two{display:grid;grid-template-rows:18px 18px;gap:3px;flex:none}
   .two button{border:1px solid #242424;border-top-color:#555;border-left-color:#555;height:18px;line-height:15px;padding:0 2px}
   .filt .row{gap:0}.filt .row button{border-top:0;border-left:0}
   .filt{width:98px;margin-right:3px}
   .time{width:87px}.time .row{gap:3px}.nav{grid-template-columns:repeat(5,19px);column-gap:0;margin-left:-2px}`,
  `<div class="listen"><i></i><input aria-label="MAXScript 侦听器" value="欢迎使用 MAXScript"></div>
   <div class="mid"><div class="row"><span class="msg">选择了 1 个 对象</span><mx-tool size="s" icon="balloon"></mx-tool><mx-tool size="s" icon="lock"></mx-tool><mx-tool size="s" icon="absmode"></mx-tool>
   <span class="coords"><mx-spin label="X:" value="3869.56"></mx-spin><mx-spin label="Y:" value="0.0"></mx-spin><mx-spin label="Z:" value="-61.387"></mx-spin></span><span class="box">栅格 = 10.0</span></div>
   <div class="row"><span class="msg">渲染设置...</span><mx-tool on size="s" icon="cube"></mx-tool><span class="box">添加时间标记</span></div></div>
   <button class="key" aria-label="设置关键点"><mx-icon name="key"></mx-icon></button>
   <div class="two"><button>自动关键点</button><button>设置关键点</button></div>
   <div class="two filt"><mx-select label="关键点集">选定对象</mx-select><div class="row"><mx-tool size="s" icon="tangent"></mx-tool><button>关键点过滤器...</button></div></div>
   <div class="two time"><span></span><div class="row"><mx-icon size="m" name="keymode"></mx-icon><mx-spin frame value="0"></mx-spin></div></div>
   <div class="two nav"><span></span><span></span>${['zoomAll', 'extents', 'extentsAll', 'timecfg', 'fov', 'hand', 'orbit', 'maximize'].map(n => `<mx-tool size="s" icon="${n}"></mx-tool>`).join('')}</div>`);

element('task-strip', `:host{display:block;height:4px;background:linear-gradient(90deg,#1d5f8e,#2f86b8 5%,#3b97c4 28%,#b9dcec 29%,#c3e0ee 33%,#3b97c4 34%,#c3e0ee 35%,#c3e0ee 43%,#2b7fc4 44%,#1c6cb4 55%,#8db8da 58%,#1d5ea4 62%,#1b4e8c 94%,#9db9d6 97%)}`, '');

/* ---------- overlays ---------- */
element('site-badge', `:host{display:flex;width:180px;height:85px;background:#222f57;color:#d3d6de;align-items:center;gap:12px;padding-left:15px}
   svg{width:34px;height:36px;flex:none}
   b{display:block;font:700 26px/28px "Noto Sans CJK SC",sans-serif}small{display:block;font:13px/16px Inter,sans-serif}`,
  `<svg viewBox="0 0 34 36"><path d="M9 6v22c0 3 2 4 4 3l16-10c3-2 3-5 0-7L13 3C10 2 9 3 9 6zM4 6C1 8 1 9 1 12v15c0 6 5 9 11 7" fill="none" stroke="#d3d6de" stroke-width="3" stroke-linecap="round"/><path d="M14 13v9l7-4z" fill="#d3d6de"/><path d="M23 14v8" stroke="#d3d6de" stroke-width="2"/></svg><div><b>溜溜自学</b><small>zixue.3D66.COM</small></div>`);

element('max-app', `:host{display:flex;flex-direction:column;min-height:100vh;margin:0 3px 0 2px;position:relative;background:#444}
   .work{flex:1;display:flex;min-height:0}.left{flex:1;display:flex;flex-direction:column;min-width:0}
   .mark{position:absolute;border:5px solid #fb0007;z-index:20;pointer-events:none}
   .m1{left:433px;top:12px;width:75px;height:28px}.m2{left:439px;top:54px;width:249px;height:37px}
   .wm{position:absolute;right:58px;bottom:22px;z-index:6}
   .ghost{position:absolute;right:222px;bottom:50px;z-index:5;font:bold 46px/46px "Liberation Sans",sans-serif;color:#dcdcdc}
   .paw,.tail{position:absolute;z-index:5}
   .paw{right:139px;bottom:100px;width:34px;height:18px}.tail{right:238px;bottom:24px;width:14px;height:24px}`,
  `<title-bar></title-bar><menu-bar></menu-bar><tool-bar></tool-bar><ribbon-bar></ribbon-bar>
   <div class="work"><div class="left"><view-port></view-port><time-slider></time-slider><track-bar></track-bar></div><command-panel></command-panel></div>
   <status-bar></status-bar><task-strip></task-strip>
   <div class="mark m1"></div><div class="mark m2"></div>
   <span class="ghost">E</span><svg class="paw" viewBox="0 0 34 18"><ellipse cx="9" cy="12" rx="7" ry="10" fill="#d2d2d2"/><ellipse cx="26" cy="13" rx="7" ry="9" fill="#d2d2d2"/></svg>
   <svg class="tail" viewBox="0 0 14 24"><path d="M2 1h3v3H2zM8 1h3v3H8z" fill="#dcdcdc"/><path d="M0 21c4 2 5 0 5-3" fill="none" stroke="#dcdcdc" stroke-width="2"/></svg>
   <site-badge class="wm"></site-badge>`);
</script>
</body>
</html>
